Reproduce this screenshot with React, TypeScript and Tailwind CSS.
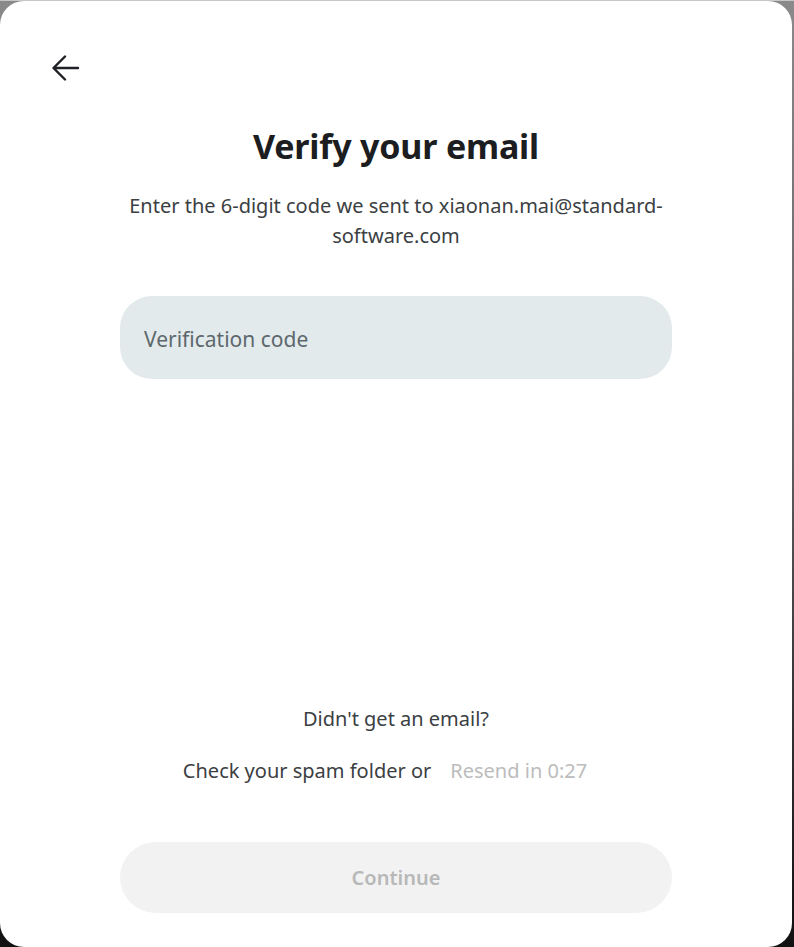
import React, { useState } from "react";

const font = { fontFamily: '"Noto Sans", "Open Sans", sans-serif' };

const BackArrow = () => (
  <svg width="28" height="28" viewBox="0 0 28 28" fill="none" className="text-[#1f2124]">
    <path
      d="M26 14H2M13 2.5 1.5 14 13 25.5"
      stroke="currentColor"
      strokeWidth="2.4"
      strokeLinecap="round"
      strokeLinejoin="round"
    />
  </svg>
);

const App = () => {
  const [code, setCode] = useState("");

  return (
    <div className="w-[794px] h-[947px] bg-gradient-to-b from-[#8a8a8a] via-[#5a5a5a] to-[#111] border-t border-[#c6c6c6]">
      <div
        className="w-[792px] h-[946px] bg-white rounded-[24px] flex flex-col items-center"
        style={font}
      >
        {/* back button */}
        <div className="w-full pl-[52px] pt-[53px]">
          <button className="block">
            <BackArrow />
          </button>
        </div>

        <h1 className="mt-[44px] text-[34px] leading-[40px] font-bold text-[#1b1d20] tracking-[-0.2px]">
          Verify your email
        </h1>
        <p className="mt-[25px] w-[560px] text-center text-[20px] leading-[30px] text-[#3b4043]">
          Enter the 6-digit code we sent to xiaonan.mai@standard-software.com
        </p>

        <input
          value={code}
          onChange={(e) => setCode(e.target.value)}
          placeholder="Verification code"
          className="mt-[45px] w-[552px] h-[83px] rounded-[32px] bg-[#e3eaec] px-[24px] pt-[3px] text-[21px] text-[#1b1d20] placeholder:text-[#5d686d] outline-none"
        />

        {/* resend */}
        <div className="mt-auto flex flex-col items-center text-[20px] text-[#3b4043]">
          <p className="leading-[28px]">Didn't get an email?</p>
          <div className="mt-[24px] pr-[22px] flex items-center gap-[19px] leading-[28px]">
            <span>Check your spam folder or</span>
            <span className="text-[#bcbcbc]">Resend in 0:27</span>
          </div>
        </div>

        <button
          disabled
          className="mt-[57px] mb-[34px] w-[552px] h-[71px] rounded-[36px] bg-[#f2f2f2] text-[20px] font-semibold text-[#b8b8b8]"
        >
          Continue
        </button>
      </div>
    </div>
  );
};

export default App;
